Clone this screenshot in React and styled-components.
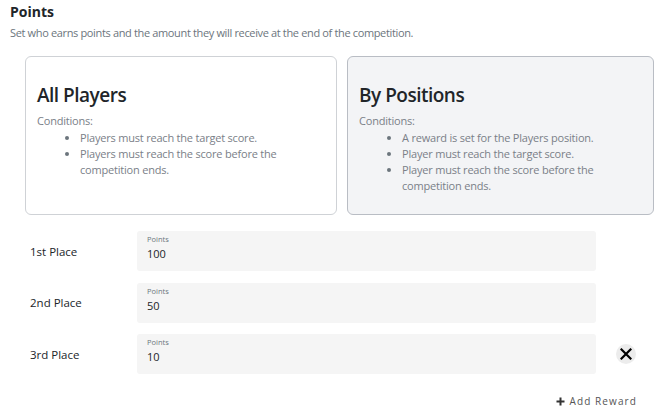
import React from "react";
import styled, { createGlobalStyle } from "styled-components";

const Global = createGlobalStyle`
  html, body { margin: 0; padding: 0; background: #fff; }
  body { font-family: "Open Sans", "Noto Sans", sans-serif; color: #212529; }
  * { box-sizing: border-box; }
`;

const Page = styled.div`
  width: 670px;
  padding: 2px 10px 0 10px;
`;

const Title = styled.h3`
  margin: 0;
  font-size: 14px;
  font-weight: 700;
  line-height: 20px;
`;

const Subtitle = styled.p`
  margin: 3px 0 0 0;
  font-size: 11px;
  line-height: 16px;
  color: #6c757d;
  letter-spacing: -0.35px;
`;

const Cards = styled.div`
  display: grid;
  grid-template-columns: 312px 307px;
  gap: 10px;
  margin: 15px 0 0 15px;
`;

const Card = styled.div`
  height: 159px;
  border: 1px solid ${p => (p.$selected ? "#b9bdc4" : "#cfd2d6")};
  background: ${p => (p.$selected ? "#f3f4f6" : "#fff")};
  border-radius: 6px;
  padding: 25px 12px 0 11px;
`;

const CardTitle = styled.h2`
  margin: 0;
  font-size: 19px;
  font-weight: 600;
  line-height: 26px;
  color: #212529;
  letter-spacing: -0.5px;
`;

const Conditions = styled.div`
  margin-top: 5px;
  font-size: 11px;
  line-height: 16px;
  color: #7a8088;
  letter-spacing: -0.2px;
`;

const List = styled.ul`
  margin: 1px 0 0 0;
  padding-left: 43px;
  li { line-height: 16px; }
  li::marker { color: #6c757d; }
`;

const Rows = styled.div`
  display: flex;
  flex-direction: column;
  gap: 11.5px;
  margin-top: 16px;
`;

const Row = styled.div`
  display: grid;
  grid-template-columns: 127px 459px 60px;
  align-items: center;
`;

const Label = styled.div`
  padding-left: 20px;
  font-size: 11.5px;
  color: #212529;
`;

const Field = styled.div`
  height: 40px;
  background: #f5f5f5;
  border-radius: 3px;
  padding: 3px 10px 0 10px;
`;

const FieldLabel = styled.div`
  font-size: 7.5px;
  line-height: 10px;
  color: #6c757d;
`;

const FieldValue = styled.div`
  font-size: 11px;
  line-height: 16px;
  margin-top: 2px;
  color: #212529;
`;

const RemoveBtn = styled.button`
  justify-self: center;
  width: 20px;
  height: 20px;
  border-radius: 50%;
  border: none;
  background: #ececec;
  padding: 0;
  display: flex;
  align-items: center;
  justify-content: center;
`;

const Footer = styled.div`
  display: flex;
  justify-content: flex-end;
  padding-right: 23px;
  margin-top: 20px;
`;

const AddBtn = styled.button`
  border: none;
  background: none;
  padding: 0;
  display: flex;
  align-items: center;
  gap: 5px;
  font-family: inherit;
  font-size: 10px;
  letter-spacing: 1.1px;
  color: #555;
`;

const places = [
  { label: "1st Place", value: "100" },
  { label: "2nd Place", value: "50" },
  { label: "3rd Place", value: "10", removable: true },
];

export default function App() {
  return (
    <Page>
      <Global />
      <Title>Points</Title>
      <Subtitle>Set who earns points and the amount they will receive at the end of the competition.</Subtitle>
      <Cards>
        <Card>
          <CardTitle>All Players</CardTitle>
          <Conditions>
            Conditions:
            <List>
              <li>Players must reach the target score.</li>
              <li>Players must reach the score before the competition ends.</li>
            </List>
          </Conditions>
        </Card>
        <Card $selected>
          <CardTitle>By Positions</CardTitle>
          <Conditions>
            Conditions:
            <List>
              <li>A reward is set for the Players position.</li>
              <li>Player must reach the target score.</li>
              <li>Player must reach the score before the competition ends.</li>
            </List>
          </Conditions>
        </Card>
      </Cards>
      <Rows>
        {places.map(p => (
          <Row key={p.label}>
            <Label>{p.label}</Label>
            <Field>
              <FieldLabel>Points</FieldLabel>
              <FieldValue>{p.value}</FieldValue>
            </Field>
            {p.removable ? (
              <RemoveBtn aria-label="Remove">
                <svg width="12" height="12" viewBox="0 0 12 12">
                  <path d="M1.5 1.5 L10.5 10.5 M10.5 1.5 L1.5 10.5" stroke="#000" strokeWidth="2.2" strokeLinecap="square" />
                </svg>
              </RemoveBtn>
            ) : <span />}
          </Row>
        ))}
      </Rows>
      <Footer>
        <AddBtn>
          <svg width="9" height="9" viewBox="0 0 9 9">
            <path d="M4.5 0.5 V8.5 M0.5 4.5 H8.5" stroke="#333" strokeWidth="2" />
          </svg>
          Add Reward
        </AddBtn>
      </Footer>
    </Page>
  );
}
